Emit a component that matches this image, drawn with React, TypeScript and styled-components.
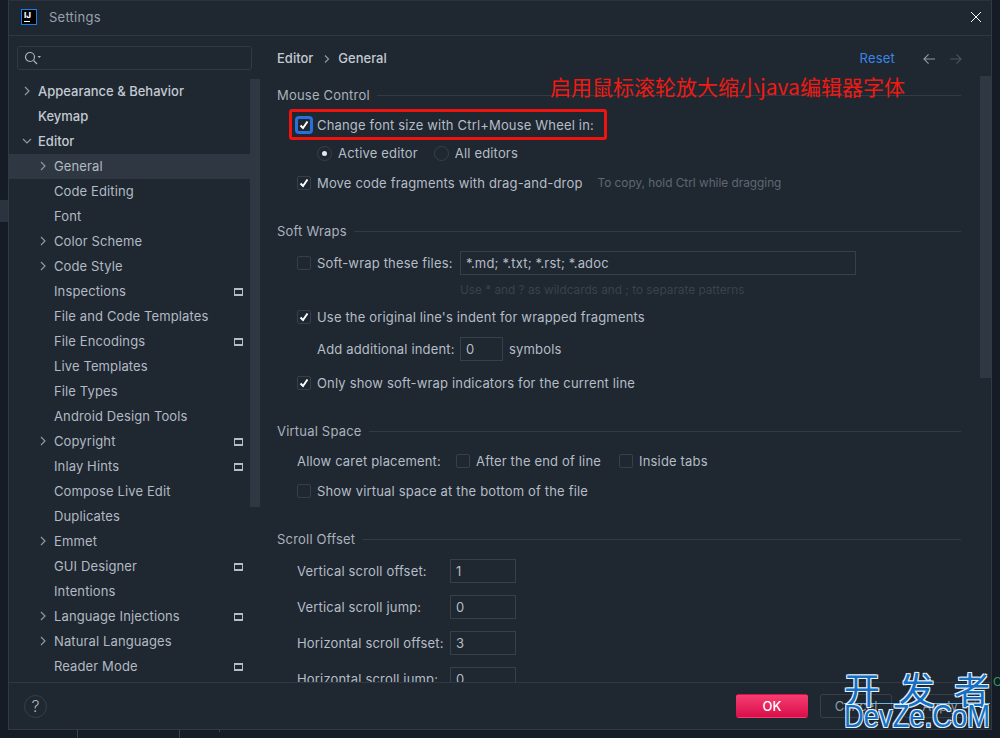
import React from "react";
import styled, { createGlobalStyle } from "styled-components";

const GlobalStyle = createGlobalStyle`
    html, body {
        margin: 0;
        padding: 0;
        background: #161c25;
    }
    #root {
        width: 1000px;
        height: 738px;
        overflow: hidden;
    }
`;

const Desktop = styled.div`
    position: relative;
    width: 1000px;
    height: 738px;
    padding-left: 8px;
    box-sizing: border-box;
    background: #161c25;
    font-family: Inter, "Noto Sans", sans-serif;
    font-size: 13px;
    color: #b5bdc6;
    overflow: hidden;
`;

const EdgePatch = styled.div`
    position: absolute;
    left: 0;
    top: 200px;
    width: 8px;
    height: 22px;
    background: #2b343e;
`;

const EdgeTick = styled.div<{ $x: number; $h: number }>`
    position: absolute;
    left: ${(p) => p.$x}px;
    top: 730px;
    width: 1px;
    height: ${(p) => p.$h}px;
    background: #39424d;
`;

const EdgeLetter = styled.div`
    position: absolute;
    left: 993px;
    top: 674px;
    font-size: 12px;
    color: #2f9e55;
`;

const Dialog = styled.div`
    width: 984px;
    height: 730px;
    box-sizing: border-box;
    display: flex;
    flex-direction: column;
    background: #1f2731;
    border: 1px solid #303a45;
    border-top-color: #2a333d;
`;

const TitleBar = styled.div`
    height: 35px;
    flex: none;
    box-sizing: border-box;
    display: flex;
    align-items: center;
    padding: 0 9px 2px 12px;
    border-bottom: 1px solid #2f3944;
`;

const AppLogo = styled.div`
    position: relative;
    width: 16px;
    height: 16px;
    box-sizing: border-box;
    background: #000;
    border: 1px solid #1f7fe8;
    color: #fff;
    font-size: 8px;
    font-weight: 800;
    line-height: 10px;
    padding-left: 2px;
    margin-right: 12px;
    &::after {
        content: "";
        position: absolute;
        left: 2px;
        bottom: 2px;
        width: 6px;
        height: 1px;
        background: #fff;
    }
`;

const TitleText = styled.div`
    flex: 1;
    color: #98a1ab;
    letter-spacing: 0.25px;
`;

const CloseButton = styled.svg`
    width: 12px;
    height: 12px;
    stroke: #fff;
    stroke-width: 1;
    fill: none;
`;

const Body = styled.div`
    flex: 1;
    min-height: 0;
    display: flex;
    border-bottom: 1px solid #2f3944;
`;

const Sidebar = styled.div`
    width: 251px;
    flex: none;
    display: flex;
    flex-direction: column;
    overflow: hidden;
`;

const SearchBox = styled.div`
    height: 24px;
    flex: none;
    box-sizing: border-box;
    margin: 10px 0 9px 8px;
    width: 235px;
    display: flex;
    align-items: center;
    padding-left: 6px;
    border: 1px solid #303a45;
    border-radius: 3px;
`;

const SidebarBody = styled.div`
    flex: 1;
    min-height: 0;
    display: flex;
    align-items: flex-start;
`;

const Tree = styled.div`
    width: 241px;
    flex: none;
`;

const TreeRow = styled.div<{ $level: number; $selected?: boolean; $top?: boolean }>`
    position: relative;
    height: 25px;
    box-sizing: border-box;
    display: flex;
    align-items: center;
    padding-left: ${(p) => (p.$level === 0 ? 29 : 45)}px;
    padding-bottom: 1px;
    background: ${(p) => (p.$selected ? "#2f3842" : "transparent")};
    color: ${(p) => (p.$top ? "#c3cad2" : "#b2bac3")};
    font-weight: ${(p) => (p.$top ? 500 : 400)};
    letter-spacing: ${(p) => (p.$top ? 0 : 0.12)}px;
`;

const Caret = styled.svg<{ $level: number }>`
    position: absolute;
    left: ${(p) => (p.$level === 0 ? 13 : 29)}px;
    top: 7px;
    width: 10px;
    height: 10px;
    fill: none;
    stroke: #8f98a2;
    stroke-width: 1.2;
`;

const ProjectBadge = styled.span`
    position: absolute;
    left: 225px;
    top: 9px;
    width: 9px;
    height: 8px;
    box-sizing: border-box;
    background: #1f2731;
    border: 1px solid #b4bcc5;
    border-top-width: 2px;
    border-bottom-width: 2px;
`;

const ScrollTrack = styled.div<{ $h: number }>`
    width: 10px;
    height: ${(p) => p.$h}px;
    flex: none;
    background: #2f3842;
`;

const Content = styled.div`
    flex: 1;
    min-width: 0;
    position: relative;
    overflow: hidden;
    padding-left: 16px;
    border-left: 1px solid #1f2731;
`;

const ContentScroll = styled(ScrollTrack)`
    position: absolute;
    right: 0;
    top: 40px;
    width: 11px;
`;

const Crumbs = styled.div`
    height: 47px;
    width: 685px;
    box-sizing: border-box;
    padding-top: 14px;
    display: flex;
    align-items: flex-start;
    color: #c3cad2;
    font-weight: 500;
    line-height: 16px;
`;

const CrumbSep = styled.svg`
    width: 8px;
    height: 8px;
    margin: 5px 7px 0 10px;
    fill: none;
    stroke: #8f98a2;
    stroke-width: 1.2;
`;

const ResetLink = styled.span`
    margin-left: auto;
    color: #3a86e8;
    letter-spacing: 0.2px;
    font-weight: 400;
`;

const NavArrow = styled.svg<{ $on?: boolean }>`
    width: 13px;
    height: 12px;
    margin: 3px 0 0 ${(p) => (p.$on ? 28 : 13)}px;
    fill: none;
    stroke: ${(p) => (p.$on ? "#8f98a2" : "#4a535e")};
    stroke-width: 1.2;
`;

const SectionTitle = styled.div<{ $gap?: number }>`
    width: 684px;
    height: 24px;
    margin-top: ${(p) => p.$gap ?? 0}px;
    display: flex;
    align-items: center;
    gap: 7px;
    color: #aab2bb;
    letter-spacing: 0.2px;
    &::after {
        content: "";
        flex: 1;
        height: 1px;
        background: #313b46;
    }
`;

const Row = styled.div<{ $h: number; $indent?: number }>`
    height: ${(p) => p.$h}px;
    display: flex;
    align-items: center;
    padding-left: ${(p) => p.$indent ?? 20}px;
    letter-spacing: 0.17px;
    white-space: nowrap;
`;

const CheckBox = styled.span<{ $focus?: boolean; $ml?: number }>`
    width: 14px;
    height: 14px;
    flex: none;
    box-sizing: border-box;
    display: inline-flex;
    align-items: center;
    justify-content: center;
    margin: 0 6px 0 ${(p) => p.$ml ?? 0}px;
    border: 1px solid ${(p) => (p.$focus ? "#2a6fdb" : "#36404b")};
    border-radius: 2px;
    background: #1f2731;
    box-shadow: ${(p) => (p.$focus ? "0 0 0 2px #2a6fdb" : "none")};
`;

const Tick = styled.svg`
    width: 10px;
    height: 10px;
    fill: none;
    stroke: #fff;
    stroke-width: 2;
`;

const Radio = styled.span<{ $on?: boolean; $ml?: number }>`
    width: 15px;
    height: 15px;
    flex: none;
    box-sizing: border-box;
    display: inline-flex;
    align-items: center;
    justify-content: center;
    margin: 0 6px 0 ${(p) => p.$ml ?? 0}px;
    border: 1px solid #36404b;
    border-radius: 50%;
    &::after {
        content: "";
        width: 5px;
        height: 5px;
        border-radius: 50%;
        background: ${(p) => (p.$on ? "#e6e9ec" : "transparent")};
    }
`;

const Hint = styled.span<{ $ml: number; $faint?: boolean }>`
    margin-left: ${(p) => p.$ml}px;
    padding-top: ${(p) => (p.$faint ? 2 : 0)}px;
    font-size: 11.8px;
    letter-spacing: 0;
    color: ${(p) => (p.$faint ? "#39424d" : "#5f6873")};
`;

const Unit = styled.span`
    margin-left: 6px;
`;

const Field = styled.span<{ $w: number }>`
    width: ${(p) => p.$w}px;
    height: 24px;
    flex: none;
    box-sizing: border-box;
    display: inline-flex;
    align-items: center;
    padding-left: 5px;
    border: 1px solid #36404b;
    color: #b5bdc6;
`;

const LabelCol = styled.span<{ $w: number }>`
    width: ${(p) => p.$w}px;
    flex: none;
`;

const Footer = styled.div`
    height: 46px;
    flex: none;
    box-sizing: border-box;
    display: flex;
    align-items: center;
    padding: 0 15px 0 15px;
`;

const HelpButton = styled.div`
    width: 23px;
    height: 23px;
    box-sizing: border-box;
    border: 1px solid #36404b;
    border-radius: 50%;
    display: flex;
    align-items: center;
    justify-content: center;
    color: #aab2bb;
    font-size: 16px;
    font-weight: 300;
    margin-right: auto;
`;

const Button = styled.div<{ $primary?: boolean }>`
    width: 72px;
    height: 24px;
    box-sizing: border-box;
    display: flex;
    align-items: center;
    justify-content: center;
    margin-left: 12px;
    border-radius: 3px;
    border: 1px solid ${(p) => (p.$primary ? "transparent" : "#36404b")};
    background: ${(p) => (p.$primary ? "linear-gradient(#f63d70, #d80f4b)" : "transparent")};
    color: ${(p) => (p.$primary ? "#fff" : "#8f98a2")};
    font-weight: ${(p) => (p.$primary ? 500 : 400)};
`;

const RedFrame = styled.div`
    position: absolute;
    left: 289px;
    top: 109px;
    width: 318px;
    height: 31px;
    box-sizing: border-box;
    border: 3px solid #f01410;
    border-radius: 3px;
`;

const RedNote = styled.div`
    position: absolute;
    left: 550px;
    top: 71px;
    font-family: "Noto Sans CJK SC", sans-serif;
    font-size: 21px;
    line-height: 30px;
    color: #f01a12;
    white-space: nowrap;
`;

const Watermark = styled.div`
    position: absolute;
    left: 844px;
    top: 668px;
    width: 146px;
    color: #1470c4;
    font-family: "Liberation Sans", sans-serif;
    text-shadow: 1px 1px 0 #e8f2fa, -1px -1px 0 #e8f2fa, 1px -1px 0 #e8f2fa, -1px 1px 0 #e8f2fa;
    white-space: nowrap;
`;

const WatermarkTop = styled.div`
    display: flex;
    justify-content: space-between;
    height: 35px;
    font-family: "Noto Sans CJK SC", sans-serif;
    font-size: 36px;
    line-height: 40px;
    border-bottom: 1px solid #6fb6e8;
`;

const WatermarkBottom = styled.div`
    margin-top: -2px;
    font-size: 32px;
    line-height: 28px;
    transform: scaleX(0.855);
    transform-origin: left center;
`;

type Item = { name: string; level: number; caret?: boolean; open?: boolean; badge?: boolean; selected?: boolean };

const items: Item[] = [
    { name: "Appearance & Behavior", level: 0, caret: true },
    { name: "Keymap", level: 0 },
    { name: "Editor", level: 0, caret: true, open: true },
    { name: "General", level: 1, caret: true, selected: true },
    { name: "Code Editing", level: 1 },
    { name: "Font", level: 1 },
    { name: "Color Scheme", level: 1, caret: true },
    { name: "Code Style", level: 1, caret: true },
    { name: "Inspections", level: 1, badge: true },
    { name: "File and Code Templates", level: 1 },
    { name: "File Encodings", level: 1, badge: true },
    { name: "Live Templates", level: 1 },
    { name: "File Types", level: 1 },
    { name: "Android Design Tools", level: 1 },
    { name: "Copyright", level: 1, caret: true, badge: true },
    { name: "Inlay Hints", level: 1, badge: true },
    { name: "Compose Live Edit", level: 1 },
    { name: "Duplicates", level: 1 },
    { name: "Emmet", level: 1, caret: true },
    { name: "GUI Designer", level: 1, badge: true },
    { name: "Intentions", level: 1 },
    { name: "Language Injections", level: 1, caret: true, badge: true },
    { name: "Natural Languages", level: 1, caret: true },
    { name: "Reader Mode", level: 1, badge: true },
];

const Check = ({ on, focus, ml }: { on?: boolean; focus?: boolean; ml?: number }) => (
    <CheckBox $focus={focus} $ml={ml}>
        {on && (
            <Tick viewBox="0 0 10 10">
                <path d="M1.5 5.5 L4 8 L8.5 1.5" />
            </Tick>
        )}
    </CheckBox>
);

export default function App() {
    return (
        <Desktop>
            <GlobalStyle />
            <EdgePatch />
            <EdgeTick $x={77} $h={8} />
            <EdgeTick $x={179} $h={8} />
            <EdgeTick $x={219} $h={2} />
            <EdgeLetter>C</EdgeLetter>
            <Dialog>
                <TitleBar>
                    <AppLogo>IJ</AppLogo>
                    <TitleText>Settings</TitleText>
                    <CloseButton viewBox="0 0 12 12">
                        <path d="M1 1 L11 11 M11 1 L1 11" />
                    </CloseButton>
                </TitleBar>
                <Body>
                    <Sidebar>
                        <SearchBox>
                            <svg width="18" height="14" viewBox="0 0 18 14" fill="none" stroke="#aab2bb" strokeWidth="1.2">
                                <circle cx="6" cy="6" r="4.5" />
                                <path d="M9.5 9.5 L13 13" />
                                <path d="M13.5 5 H17 L15.25 7 Z" fill="#aab2bb" stroke="none" />
                            </svg>
                        </SearchBox>
                        <SidebarBody>
                            <Tree>
                                {items.map((item) => (
                                    <TreeRow
                                        key={item.name}
                                        $level={item.level}
                                        $selected={item.selected}
                                        $top={item.level === 0}
                                    >
                                        {item.caret && (
                                            <Caret $level={item.level} viewBox="0 0 10 10">
                                                <path d={item.open ? "M1 3 L5 7 L9 3" : "M3 1 L7 5 L3 9"} />
                                            </Caret>
                                        )}
                                        {item.name}
                                        {item.badge && <ProjectBadge />}
                                    </TreeRow>
                                ))}
                            </Tree>
                            <ScrollTrack $h={428} />
                        </SidebarBody>
                    </Sidebar>
                    <Content>
                        <ContentScroll $h={302} />
                        <Crumbs>
                            Editor
                            <CrumbSep viewBox="0 0 8 8">
                                <path d="M2 0.5 L5.5 4 L2 7.5" />
                            </CrumbSep>
                            General
                            <ResetLink>Reset</ResetLink>
                            <NavArrow $on viewBox="0 0 14 12">
                                <path d="M13 6 H1 M6 1 L1 6 L6 11" />
                            </NavArrow>
                            <NavArrow viewBox="0 0 14 12">
                                <path d="M1 6 H13 M8 1 L13 6 L8 11" />
                            </NavArrow>
                        </Crumbs>

                        <SectionTitle>Mouse Control</SectionTitle>
                        <Row $h={36}>
                            <Check on focus />
                            Change font size with Ctrl+Mouse Wheel in:
                        </Row>
                        <Row $h={20} $indent={40}>
                            <Radio $on />
                            Active editor
                            <Radio $ml={16} />
                            All editors
                        </Row>
                        <Row $h={40}>
                            <Check on />
                            Move code fragments with drag-and-drop
                            <Hint $ml={15}>To copy, hold Ctrl while dragging</Hint>
                        </Row>

                        <SectionTitle $gap={16}>Soft Wraps</SectionTitle>
                        <Row $h={40}>
                            <Check />
                            <LabelCol $w={143}>Soft-wrap these files:</LabelCol>
                            <Field $w={396}>*.md; *.txt; *.rst; *.adoc</Field>
                        </Row>
                        <Row $h={12} $indent={183}>
                            <Hint $ml={0} $faint>Use * and ? as wildcards and ; to separate patterns</Hint>
                        </Row>
                        <Row $h={44}>
                            <Check on />
                            Use the original line's indent for wrapped fragments
                        </Row>
                        <Row $h={20} $indent={40}>
                            <LabelCol $w={143}>Add additional indent:</LabelCol>
                            <Field $w={43}>0</Field>
                            <Unit>symbols</Unit>
                        </Row>
                        <Row $h={48}>
                            <Check on />
                            Only show soft-wrap indicators for the current line
                        </Row>

                        <SectionTitle $gap={12}>Virtual Space</SectionTitle>
                        <Row $h={36}>
                            <LabelCol $w={159}>Allow caret placement:</LabelCol>
                            <Check />
                            After the end of line
                            <Check ml={18} />
                            Inside tabs
                        </Row>
                        <Row $h={24}>
                            <Check />
                            Show virtual space at the bottom of the file
                        </Row>

                        <SectionTitle $gap={24}>Scroll Offset</SectionTitle>
                        <Row $h={40}>
                            <LabelCol $w={153}>Vertical scroll offset:</LabelCol>
                            <Field $w={66}>1</Field>
                        </Row>
                        <Row $h={32}>
                            <LabelCol $w={153}>Vertical scroll jump:</LabelCol>
                            <Field $w={66}>0</Field>
                        </Row>
                        <Row $h={40}>
                            <LabelCol $w={153}>Horizontal scroll offset:</LabelCol>
                            <Field $w={66}>3</Field>
                        </Row>
                        <Row $h={32}>
                            <LabelCol $w={153}>Horizontal scroll jump:</LabelCol>
                            <Field $w={66}>0</Field>
                        </Row>
                    </Content>
                </Body>
                <Footer>
                    <HelpButton>?</HelpButton>
                    <Button $primary>OK</Button>
                    <Button>Cancel</Button>
                    <Button>Apply</Button>
                </Footer>
            </Dialog>
            <RedFrame />
            <RedNote>启用鼠标滚轮放大缩小java编辑器字体</RedNote>
            <Watermark>
                <WatermarkTop>
                    <span>开</span>
                    <span>发</span>
                    <span>者</span>
                </WatermarkTop>
                <WatermarkBottom>DevZe.CoM</WatermarkBottom>
            </Watermark>
        </Desktop>
    );
}
